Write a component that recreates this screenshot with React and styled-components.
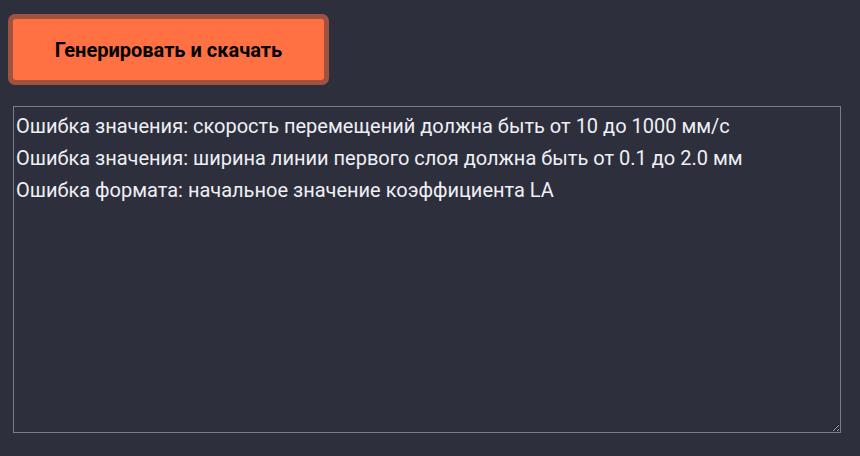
import styled, { createGlobalStyle } from "styled-components"

const Global = createGlobalStyle`
    body {
        margin: 0;
        background: #2e2f3c;
        font-family: Roboto, "Liberation Sans", sans-serif;
    }
`

const Page = styled.div`
    display: flex;
    flex-direction: column;
    align-items: flex-start;
    padding: 14px 0 0 8px;
`

const GenerateButton = styled.button`
    width: 321px;
    height: 71px;
    border: 5px solid rgba(255, 112, 67, 0.55);
    border-radius: 7px;
    background: #ff7043;
    background-clip: padding-box;
    color: #000;
    font-family: Roboto, "Liberation Sans", sans-serif;
    font-weight: 700;
    font-size: 20px;
    cursor: pointer;
`

const Log = styled.textarea`
    box-sizing: border-box;
    margin: 21px 0 0 5px;
    width: 828px;
    height: 327px;
    padding: 3px 2px;
    background: transparent;
    border: 1px solid #7d7d80;
    color: #eef0f5;
    font-family: Roboto, "Liberation Sans", sans-serif;
    font-size: 20px;
    line-height: 32px;
    outline: none;
`

const errors = [
    "Ошибка значения: скорость перемещений должна быть от 10 до 1000 мм/с",
    "Ошибка значения: ширина линии первого слоя должна быть от 0.1 до 2.0 мм",
    "Ошибка формата: начальное значение коэффициента LA",
]

const App = () => {
    return <>
        <Global />
        <Page>
            <GenerateButton type='button'>Генерировать и скачать</GenerateButton>
            <Log readOnly value={errors.join("\n")} />
        </Page>
    </>
}

export default App
